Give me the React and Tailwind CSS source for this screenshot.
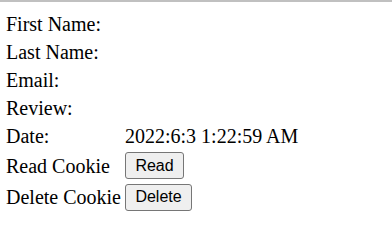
import React from 'react';

const rows = [
  { label: 'First Name:', value: '' },
  { label: 'Last Name:', value: '' },
  { label: 'Email:', value: '' },
  { label: 'Review:', value: '' },
  { label: 'Date:', value: '2022:6:3 1:22:59 AM' },
];

function Btn({ children }) {
  return (
    <button className="h-[27px] px-[9.4px] bg-[#efefef] border border-[#767676] rounded-[3px] text-[16px] leading-none text-black font-['Liberation_Sans',Arial,sans-serif]">
      {children}
    </button>
  );
}

export default function App() {
  return (
    <div className="w-[392px] h-[252px] bg-white border-t-2 border-[#c0c0c0] font-['Liberation_Serif','Times_New_Roman',serif] text-[20px] text-black overflow-hidden">
      <div className="pt-[8px] pl-[6px] flex flex-col">
        {rows.map(r => (
          <div key={r.label} className="h-[28px] flex items-center">
            <span className="w-[119px] shrink-0">{r.label}</span>
            <span className="whitespace-nowrap">{r.value}</span>
          </div>
        ))}
        {/* cookie buttons */}
        <div className="h-[31px] flex items-center">
          <span className="w-[119px] shrink-0 whitespace-nowrap">Read Cookie</span>
          <Btn>Read</Btn>
        </div>
        <div className="h-[32px] flex items-center">
          <span className="w-[119px] shrink-0 whitespace-nowrap">Delete Cookie</span>
          <Btn>Delete</Btn>
        </div>
      </div>
    </div>
  );
}
